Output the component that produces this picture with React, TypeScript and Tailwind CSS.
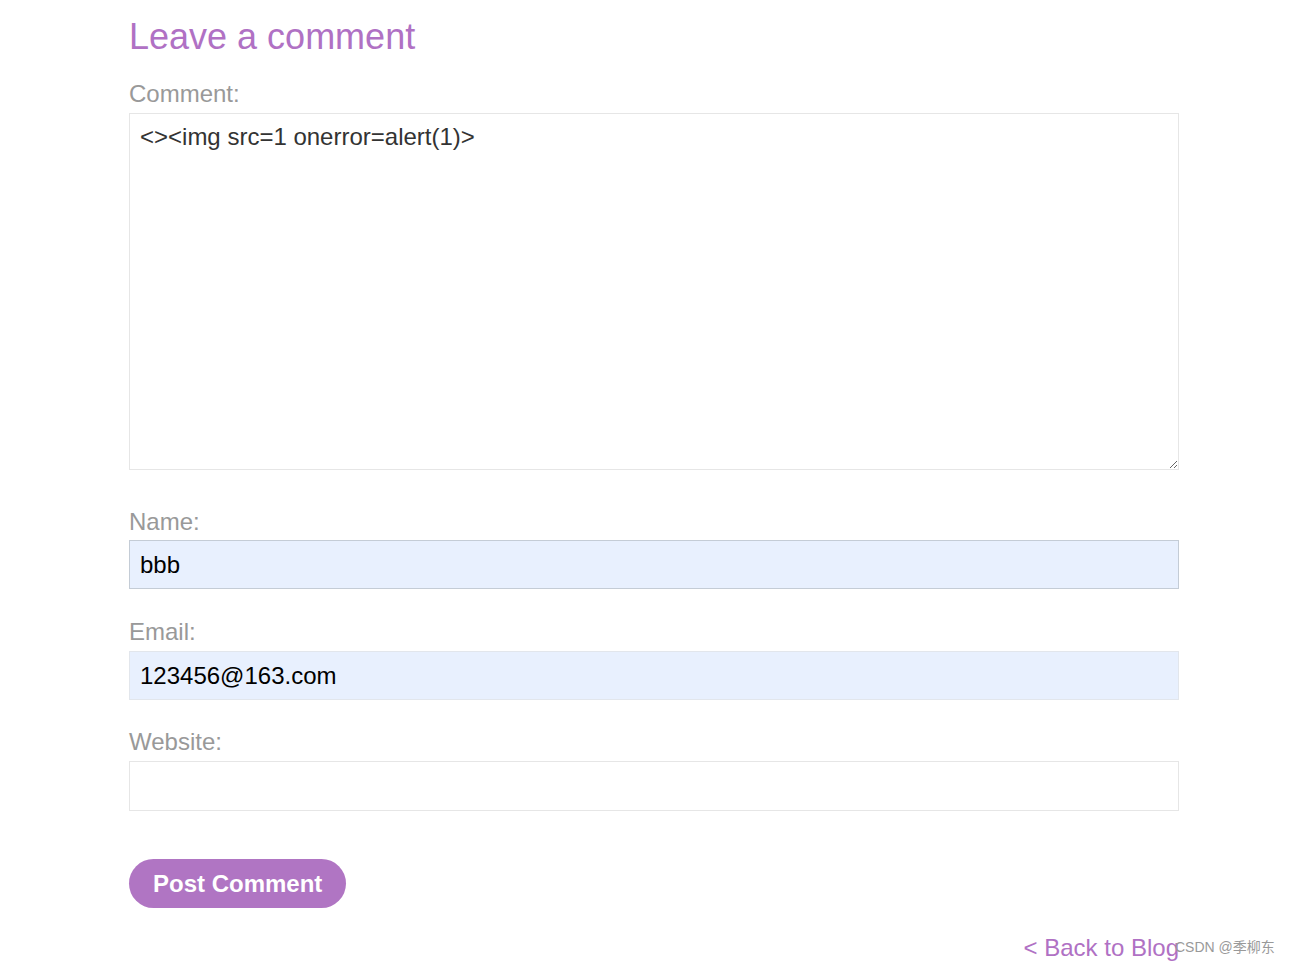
export default function App() {
  return (
    <div className="min-h-screen bg-white font-['Liberation_Sans',Arial,sans-serif] relative">
      <div className="ml-[129px] w-[1050px] pt-[16px]">
        <h1 className="text-[36px] leading-[41px] text-[#b071c4] font-normal">Leave a comment</h1>
        <form className="flex flex-col" onSubmit={(e) => e.preventDefault()}>
          <label className="mt-[23px] text-[24px] leading-[28px] text-[#999999]">Comment:</label>
          <textarea
            className="mt-[5px] h-[357px] w-full border border-[#e6e6e6] px-[10px] pt-[9px] pb-[10px] text-[24px] leading-[28px] text-[#333333] outline-none resize-y"
            defaultValue="<><img src=1 onerror=alert(1)>"
          />
          <label className="mt-[38px] text-[24px] leading-[28px] text-[#999999]">Name:</label>
          <input
            className="mt-[4px] h-[49px] w-full border border-[#c4ccd6] bg-[#e8f0fe] px-[10px] text-[24px] text-black outline-none"
            defaultValue="bbb"
          />
          <label className="mt-[29px] text-[24px] leading-[28px] text-[#999999]">Email:</label>
          <input
            className="mt-[5px] h-[49px] w-full border border-[#e2e6ec] bg-[#e8f0fe] px-[10px] text-[24px] text-black outline-none"
            defaultValue="123456@163.com"
          />
          <label className="mt-[28px] text-[24px] leading-[28px] text-[#999999]">Website:</label>
          <input className="mt-[5px] h-[50px] w-full border border-[#e6e6e6] bg-white px-[10px] text-[24px] text-black outline-none" />
          <div className="mt-[48px]">
            <button
              type="submit"
              className="h-[49px] rounded-full bg-[#b075c3] px-[24px] text-[24px] font-bold text-white"
            >
              Post Comment
            </button>
          </div>
        </form>
        <div className="mt-[26px] flex justify-end">
          <a href="#" className="text-[24px] leading-[28px] text-[#b071c4]">
            &lt; Back to Blog
          </a>
        </div>
      </div>
      <span className="absolute left-[1175px] top-[937px] text-[14px] text-[#999999] font-['Liberation_Sans','Noto_Sans_CJK_SC',sans-serif]">
        CSDN @季柳东
      </span>
    </div>
  );
}
